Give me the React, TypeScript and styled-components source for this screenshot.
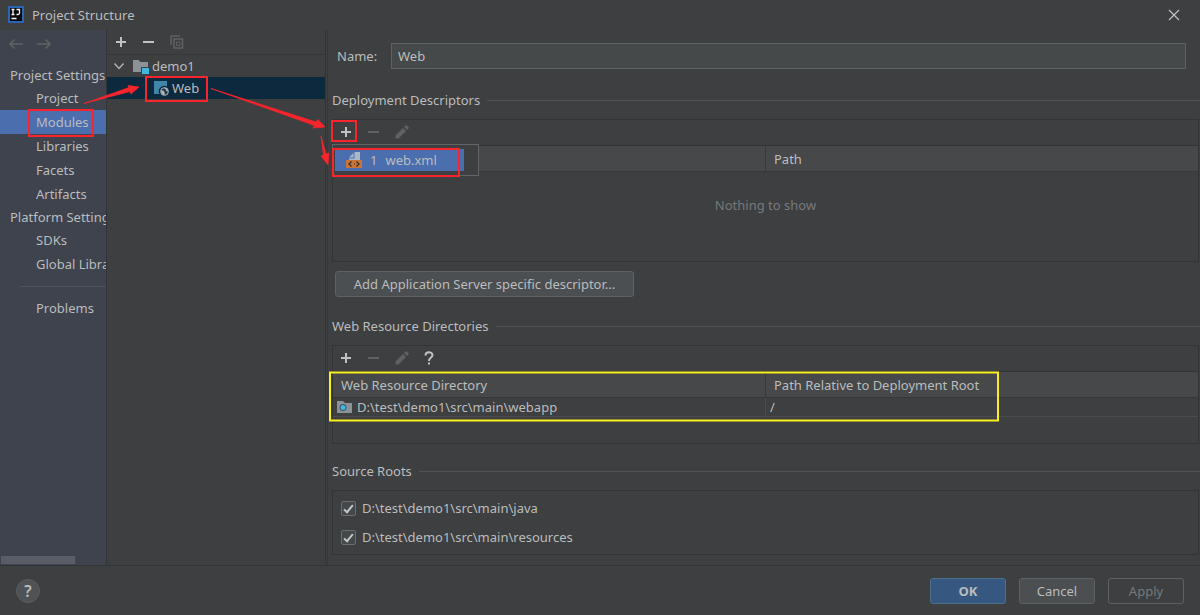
import React from "react";
import styled, { createGlobalStyle, css } from "styled-components";

const GlobalStyle = createGlobalStyle`
  *, *::before, *::after { box-sizing: border-box; }
  body {
    margin: 0;
    background: #3d3f41;
    color: #bbbcbd;
    font: 13px/20px "Noto Sans", "Open Sans", sans-serif;
  }
  button, input { font: inherit; color: inherit; }
  svg { display: block; flex: none; }
`;

const Dialog = styled.div`
  position: relative;
  display: flex;
  flex-direction: column;
  min-height: 100vh;
  overflow: hidden;
`;

const TitleBar = styled.header`
  display: flex;
  align-items: center;
  gap: 8px;
  height: 30px;
  padding: 0 18px 0 8px;
`;

const Title = styled.h1`
  flex: 1;
  margin: 0;
  font-size: 13px;
  font-weight: 400;
`;

const IconButton = styled.button`
  display: grid;
  place-items: center;
  width: 16px;
  height: 16px;
  padding: 0;
  border: 0;
  background: none;
  color: #c0c2c4;
  &:disabled { color: #5f6264; }
`;

const Body = styled.div`
  display: flex;
  flex: 1;
`;

const Sidebar = styled.nav`
  display: flex;
  flex-direction: column;
  width: 107px;
  flex: none;
  overflow: hidden;
  white-space: nowrap;
  background: #3e434d;
  border-right: 1px solid #323438;
`;

const History = styled.div`
  display: flex;
  gap: 12px;
  height: 34px;
  padding: 6px 8px;
`;

const NavHeading = styled.h2`
  margin: 0;
  padding-left: 10px;
  font-size: 13px;
  font-weight: 400;
  line-height: 22px;
`;

const NavLink = styled.a<{ $active?: boolean }>`
  display: block;
  padding-left: 36px;
  line-height: 24px;
  color: inherit;
  text-decoration: none;
  ${(p) => p.$active && css`background: #4b6eaf;`}
`;

const NavDivider = styled.hr`
  width: 100%;
  margin: 10px 0 9px 20px;
  border: 0;
  border-top: 1px solid #4f545c;
`;

const ScrollThumb = styled.div`
  width: 74px;
  height: 8px;
  margin: auto 0 1px 1px;
  background: #5a5d66;
`;

const TreePanel = styled.section`
  width: 219px;
  flex: none;
  border-right: 1px solid #323436;
`;

const TreeToolbar = styled.div`
  display: flex;
  gap: 12px;
  height: 25px;
  padding: 4px 6px;
  border-bottom: 1px solid #353739;
`;

const TreeRow = styled.div<{ $depth: number; $selected?: boolean }>`
  display: flex;
  align-items: center;
  gap: 3px;
  height: 22px;
  padding-left: ${(p) => (p.$depth ? 46 : 4)}px;
  ${(p) => p.$selected && css`background: #0d293e;`}
`;

const Chevron = styled.svg`
  margin-right: 3px;
`;

const Splitter = styled.div`
  width: 2px;
  border-right: 1px solid #353739;
`;

const Main = styled.main`
  flex: 1;
  min-width: 0;
  padding: 13px 0 10px 4px;
`;

const NameRow = styled.div`
  display: flex;
  align-items: center;
  padding: 0 14px 4px 5px;
`;

const NameLabel = styled.label`
  width: 54px;
`;

const NameInput = styled.input`
  flex: 1;
  height: 26px;
  padding: 0 6px;
  border: 1px solid #5e6162;
  background: #45494a;
`;

const SectionTitle = styled.h2`
  display: flex;
  align-items: center;
  gap: 7px;
  margin: 17px 0 9px;
  font-size: 13px;
  font-weight: 400;
  &::after {
    content: "";
    flex: 1;
    border-top: 1px solid #505254;
  }
`;

const Panel = styled.div<{ $height: number }>`
  position: relative;
  min-height: ${(p) => p.$height}px;
  margin-right: 1px;
  border: 1px solid #323436;
`;

const Toolbar = styled.div`
  display: flex;
  gap: 12px;
  height: 25px;
  padding: 4px 5px;
`;

const Table = styled.table`
  width: 100%;
  table-layout: fixed;
  border-collapse: collapse;
  text-align: left;
`;

const HeadCell = styled.th`
  height: 26px;
  padding: 0 8px;
  font-weight: 400;
  background: #46484a;
  border-top: 1px solid #323436;
  border-bottom: 1px solid #353739;
  &:first-child { width: calc(50% + 1px); }
  & + & { border-left: 1px solid #37393b; }
`;

const Cell = styled.td`
  height: 19px;
  padding: 0 4px;
  line-height: 18px;
  border-bottom: 1px solid #4a4c4e;
  & + & { border-left: 1px solid #4a4c4e; }
`;

const EmptyCell = styled.td`
  height: 66px;
  padding: 0;
  text-align: center;
  color: #77797b;
`;

const PathText = styled.span`
  display: flex;
  align-items: center;
  gap: 4px;
`;

const PushButton = styled.button<{ $primary?: boolean; $wide?: boolean }>`
  min-width: ${(p) => (p.$wide ? 299 : 76)}px;
  height: 26px;
  padding: 0 14px;
  border: 1px solid #5e6162;
  border-radius: 3px;
  background: #4b4f51;
  line-height: 20px;
  ${(p) => p.$primary && css`
    background: #365880;
    border-color: #4c708c;
    font-weight: 700;
  `}
  &:disabled {
    background: none;
    color: #77797b;
  }
`;

const ButtonRow = styled.div`
  padding: 9px 3px 2px;
`;

const Popup = styled.div`
  position: absolute;
  top: 24px;
  left: -1px;
  width: 147px;
  padding: 4px 14px 4px 2px;
  border: 1px solid #626466;
  background: #3d3f41;
`;

const PopupItem = styled.button`
  display: flex;
  align-items: center;
  gap: 8px;
  width: 100%;
  height: 22px;
  padding: 0 11px;
  border: 0;
  background: #4b6eaf;
`;

const RootsList = styled.div`
  display: flex;
  flex-direction: column;
  gap: 9px;
  padding: 7px 8px;
`;

const CheckLabel = styled.label`
  display: flex;
  align-items: center;
  gap: 6px;
`;

const CheckBox = styled.input`
  appearance: none;
  display: grid;
  place-items: center;
  width: 15px;
  height: 15px;
  margin: 0;
  border: 1px solid #6b6d6e;
  border-radius: 2px;
  background: #43494a;
  &:checked::before {
    content: "";
    width: 5px;
    height: 10px;
    border: solid #c4c6c8;
    border-width: 0 2px 2px 0;
    transform: rotate(40deg);
  }
`;

const Footer = styled.footer`
  display: flex;
  align-items: center;
  gap: 13px;
  height: 50px;
  padding: 0 16px;
  border-top: 1px solid #323436;
`;

const HelpButton = styled.button`
  width: 24px;
  height: 24px;
  margin-right: auto;
  padding: 0;
  border: 1px solid #5a5e60;
  border-radius: 50%;
  background: #4f5355;
  font-size: 16px;
  font-weight: 600;
`;

const Annotations = styled.svg`
  position: absolute;
  top: 0;
  left: 0;
  pointer-events: none;
`;

const PlusIcon = () => (
  <svg width="16" height="16" viewBox="0 0 16 16"><path d="M7 3h2v4h4v2H9v4H7V9H3V7h4z" fill="currentColor" /></svg>
);
const MinusIcon = () => (
  <svg width="16" height="16" viewBox="0 0 16 16"><path d="M2 7h11v2H2z" fill="currentColor" /></svg>
);
const CopyIcon = () => (
  <svg width="16" height="16" viewBox="0 0 16 16" fill="none" stroke="currentColor" strokeWidth="1.5">
    <path d="M2 11V2h9" /><path d="M5 5h8.500v9H5z" /><path d="M7.500 8h3.500v3.500H7.500z" strokeWidth="1" />
  </svg>
);
const PencilIcon = () => (
  <svg width="16" height="16" viewBox="0 0 16 16"><path d="M1.500 14.500v-3L9 4l3 3-7.500 7.500zM10 3l1.500-1.500q.7-.6 1.400 0l1.600 1.600q.6.700 0 1.400L13 6z" fill="currentColor" /></svg>
);
const QuestionIcon = () => (
  <svg width="16" height="16" viewBox="0 0 16 16" fill="none" stroke="currentColor" strokeWidth="2">
    <path d="M3.500 5.500C3.500 1 10.500 1.200 10.500 5.200C10.500 7.500 7 7.800 7 11M7 12.500v2" />
  </svg>
);
const ArrowIcon = ({ forward }: { forward?: boolean }) => (
  <svg width="16" height="16" viewBox="0 0 16 16" fill="none" stroke="currentColor" strokeWidth="1.500">
    <path d={forward ? "M1 8h13M9.500 3.500 14 8l-4.500 4.500" : "M15 8H2M6.500 3.500 2 8l4.500 4.500"} />
  </svg>
);
const CloseIcon = () => (
  <svg width="16" height="16" viewBox="0 0 16 16" stroke="currentColor" strokeWidth="1.200"><path d="m3 3 10 10M13 3 3 13" /></svg>
);
const LogoIcon = () => (
  <svg width="16" height="18" viewBox="0 0 16 18">
    <rect width="16" height="17" y="0" rx="1" fill="#2767b5" />
    <rect x="2" y="2" width="12" height="13" fill="#08090d" />
    <path d="M3.500 3.500h3M5 3.500v5M3.500 8.500h3M8.500 3.500h3v3.500q0 1.500-1.500 1.500H8.500M3.500 12.500h5" fill="none" stroke="#f4f6f8" strokeWidth="1.300" />
  </svg>
);
const ModuleIcon = () => (
  <svg width="16" height="16" viewBox="0 0 16 16">
    <path d="M0 2h5.500l2 2H15v5H8v5H0z" fill="#8b9398" /><path d="M9 10h7v6H9z" fill="#40b6e0" />
  </svg>
);
const WebIcon = () => (
  <svg width="16" height="16" viewBox="0 0 16 16">
    <path d="M1 1h13v5.500A5.500 5.500 0 0 0 6.500 14H1z" fill="#3f86a8" />
    <circle cx="11.500" cy="11.500" r="3.900" fill="#23384a" stroke="#aeb6bb" strokeWidth="1" />
    <path d="m8 10 3 1 1 3-1 1.200q-3-1-3-5.200M10.500 7.800l2 1.400 1 2 1.700.3q-.2-3.500-4.700-3.700" fill="#aeb6bb" />
  </svg>
);
const WebFolderIcon = () => (
  <svg width="16" height="14" viewBox="0 0 16 14">
    <path d="M0 1h6l2 2h7v10H0z" fill="#8b9398" />
    <circle cx="6" cy="7.500" r="3.500" fill="#3e5563" /><circle cx="6" cy="7.500" r="2.500" fill="#40b6e0" />
  </svg>
);
const XmlIcon = () => (
  <svg width="16" height="16" viewBox="0 0 16 16">
    <path d="M3 5.500 7.500 1v4.500zM8.500 0H14v8H3V6.500h5.500z" fill="#a9b8c8" />
    <path d="M0 8h16v8H0z" fill="#c97438" />
    <path d="M5.500 9.500 3 12l2.500 2.500M8 12h1M10.500 9.500 13 12l-2.500 2.500" fill="none" stroke="#332a2a" strokeWidth="1.200" />
  </svg>
);

const EditTools = ({ help }: { help?: boolean }) => (
  <Toolbar>
    <IconButton aria-label="Add"><PlusIcon /></IconButton>
    <IconButton aria-label="Remove" disabled><MinusIcon /></IconButton>
    <IconButton aria-label="Edit" disabled><PencilIcon /></IconButton>
    {help && <IconButton aria-label="Help"><QuestionIcon /></IconButton>}
  </Toolbar>
);

const projectLinks = ["Project", "Modules", "Libraries", "Facets", "Artifacts"];
const platformLinks = ["SDKs", "Global Libraries"];
const sourceRoots = ["D:\\test\\demo1\\src\\main\\java", "D:\\test\\demo1\\src\\main\\resources"];

export default function App() {
  return (
    <>
      <GlobalStyle />
      <Dialog>
        <TitleBar>
          <LogoIcon />
          <Title>Project Structure</Title>
          <IconButton aria-label="Close"><CloseIcon /></IconButton>
        </TitleBar>
        <Body>
          <Sidebar>
            <History>
              <IconButton aria-label="Back" disabled><ArrowIcon /></IconButton>
              <IconButton aria-label="Forward" disabled><ArrowIcon forward /></IconButton>
            </History>
            <NavHeading>Project Settings</NavHeading>
            {projectLinks.map((name) => (
              <NavLink key={name} href="#" $active={name === "Modules"}>{name}</NavLink>
            ))}
            <NavHeading>Platform Settings</NavHeading>
            {platformLinks.map((name) => <NavLink key={name} href="#">{name}</NavLink>)}
            <NavDivider />
            <NavLink href="#">Problems</NavLink>
            <ScrollThumb />
          </Sidebar>
          <TreePanel>
            <TreeToolbar>
              <IconButton aria-label="Add module"><PlusIcon /></IconButton>
              <IconButton aria-label="Remove module"><MinusIcon /></IconButton>
              <IconButton aria-label="Copy module" disabled><CopyIcon /></IconButton>
            </TreeToolbar>
            <TreeRow $depth={0}>
              <Chevron width="16" height="16" viewBox="0 0 16 16" fill="none" stroke="#b0b2b4" strokeWidth="1.500"><path d="m3.500 5.500 4.500 5 4.500-5" /></Chevron>
              <ModuleIcon />
              demo1
            </TreeRow>
            <TreeRow $depth={1} $selected>
              <WebIcon />
              Web
            </TreeRow>
          </TreePanel>
          <Splitter />
          <Main>
            <NameRow>
              <NameLabel htmlFor="facet-name">Name:</NameLabel>
              <NameInput id="facet-name" defaultValue="Web" />
            </NameRow>

            <SectionTitle>Deployment Descriptors</SectionTitle>
            <Panel $height={143}>
              <EditTools />
              <Table>
                <thead>
                  <tr><HeadCell /><HeadCell>Path</HeadCell></tr>
                </thead>
                <tbody>
                  <tr><EmptyCell colSpan={2}>Nothing to show</EmptyCell></tr>
                </tbody>
              </Table>
              <Popup>
                <PopupItem><XmlIcon /><span>1</span><span>web.xml</span></PopupItem>
              </Popup>
            </Panel>
            <ButtonRow>
              <PushButton $wide>Add Application Server specific descriptor...</PushButton>
            </ButtonRow>

            <SectionTitle>Web Resource Directories</SectionTitle>
            <Panel $height={99}>
              <EditTools help />
              <Table>
                <thead>
                  <tr>
                    <HeadCell>Web Resource Directory</HeadCell>
                    <HeadCell>Path Relative to Deployment Root</HeadCell>
                  </tr>
                </thead>
                <tbody>
                  <tr>
                    <Cell><PathText><WebFolderIcon />D:\test\demo1\src\main\webapp</PathText></Cell>
                    <Cell>/</Cell>
                  </tr>
                </tbody>
              </Table>
            </Panel>

            <SectionTitle>Source Roots</SectionTitle>
            <Panel $height={65}>
              <RootsList>
                {sourceRoots.map((path) => (
                  <CheckLabel key={path}><CheckBox type="checkbox" defaultChecked />{path}</CheckLabel>
                ))}
              </RootsList>
            </Panel>
          </Main>
        </Body>
        <Footer>
          <HelpButton aria-label="Help">?</HelpButton>
          <PushButton $primary>OK</PushButton>
          <PushButton>Cancel</PushButton>
          <PushButton disabled>Apply</PushButton>
        </Footer>
        <Annotations width="1000" height="430" viewBox="0 0 1000 430" fill="none" aria-hidden="true">
          <g stroke="#f9242c" strokeWidth="2">
            <path d="M29 110h64v26H29zM146 77h61v24h-61zM332 121h24v20h-24zM333 149h126v27H333z" />
          </g>
          <g fill="#f9242c" stroke="#f9242c" strokeWidth=".7" strokeLinejoin="round">
            <path d="M84 103.500 129 87.500 128 85.500 139 87 131 94 130 91.500z" />
            <path d="M211 88.500 316 122 318 119.500 325 127 313 128 314.500 125.500z" />
            <path d="M321 136 326 154 329 153 328 165 321 156 323.500 155z" />
          </g>
          <path d="M330 372.500h668v48H330z" stroke="#f8ee20" strokeWidth="2" />
        </Annotations>
      </Dialog>
    </>
  );
}
